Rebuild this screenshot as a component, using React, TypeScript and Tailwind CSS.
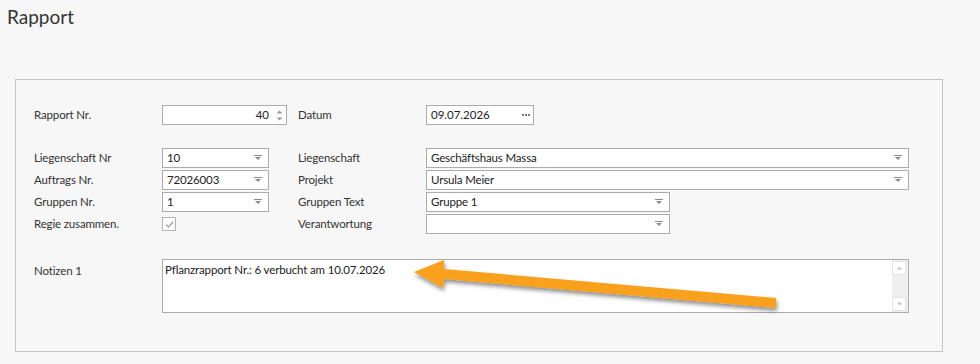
import React from 'react';

const font = { fontFamily: 'Lato, "Noto Sans", "Liberation Sans", sans-serif' };

// kleines Dropdown-Symbol (Strich + Dreieck)
function DropGlyph() {
  return (
    <svg width="8" height="6" viewBox="0 0 8 6" className="shrink-0">
      <rect x="0" y="0" width="8" height="1" fill="#8a8a8a" />
      <path d="M1 2 H7 L4 5 Z" fill="#8a8a8a" />
    </svg>
  );
}

function ComboBox({ value, width }: { value: string; width: string }) {
  return (
    <div className={`${width} h-5 bg-white border border-[#acacac] flex items-center pl-1 pr-[6px]`}>
      <span className="flex-1 text-[11.5px] tracking-[-0.15px] text-[#222] leading-none">{value}</span>
      <DropGlyph />
    </div>
  );
}

function Label({ children }: { children: React.ReactNode }) {
  return <div className="text-[11.5px] tracking-[-0.15px] text-[#333] leading-none">{children}</div>;
}

export default function App() {
  return (
    <div className="relative w-[980px] h-[364px] bg-[#f7f7f7] overflow-hidden" style={font}>
      <div className="pl-[7px] pt-[4px] text-[19px] text-[#333] leading-[26px]">Rapport</div>

      <div className="ml-[15px] mt-[49px] w-[928px] h-[273px] border border-[#c3c3c3] pl-[18px] pt-[25px]">
        {/* Rapport Nr. / Datum */}
        <div className="flex items-center h-5">
          <div className="w-[128px]"><Label>Rapport Nr.</Label></div>
          <div className="w-[136px]">
            <div className="w-[125px] h-5 bg-white border border-[#acacac] flex items-center pr-[2px]">
              <span className="flex-1 text-right text-[11.5px] text-[#222] leading-none pr-[5px]">40</span>
              <div className="flex flex-col items-center gap-[3px] w-[10px]">
                <svg width="7" height="4" viewBox="0 0 7 4"><path d="M0.5 3.5 L3.5 0.5 L6.5 3.5 Z" fill="#9a9a9a" /></svg>
                <svg width="7" height="4" viewBox="0 0 7 4"><path d="M0.5 0.5 L3.5 3.5 L6.5 0.5 Z" fill="#9a9a9a" /></svg>
              </div>
            </div>
          </div>
          <div className="w-[128px]"><Label>Datum</Label></div>
          <div className="w-[108px] h-5 bg-white border border-[#acacac] flex items-center pl-1 pr-[3px]">
            <span className="flex-1 text-[11.5px] text-[#222] leading-none">09.07.2026</span>
            <div className="flex gap-[1px]">
              <div className="w-[2px] h-[2px] bg-[#7a7a7a]" />
              <div className="w-[2px] h-[2px] bg-[#7a7a7a]" />
              <div className="w-[2px] h-[2px] bg-[#7a7a7a]" />
            </div>
          </div>
        </div>

        <div className="mt-[23px] flex flex-col gap-[2px]">
          <div className="flex items-center h-5">
            <div className="w-[128px]"><Label>Liegenschaft Nr</Label></div>
            <div className="w-[136px]"><ComboBox value="10" width="w-[107px]" /></div>
            <div className="w-[128px]"><Label>Liegenschaft</Label></div>
            <ComboBox value="Geschäftshaus Massa" width="w-[483px]" />
          </div>
          <div className="flex items-center h-5">
            <div className="w-[128px]"><Label>Auftrags Nr.</Label></div>
            <div className="w-[136px]"><ComboBox value="72026003" width="w-[107px]" /></div>
            <div className="w-[128px]"><Label>Projekt</Label></div>
            <ComboBox value="Ursula Meier" width="w-[483px]" />
          </div>
          <div className="flex items-center h-5">
            <div className="w-[128px]"><Label>Gruppen Nr.</Label></div>
            <div className="w-[136px]"><ComboBox value="1" width="w-[107px]" /></div>
            <div className="w-[128px]"><Label>Gruppen Text</Label></div>
            <ComboBox value="Gruppe 1" width="w-[244px]" />
          </div>
          <div className="flex items-center h-5">
            <div className="w-[128px]"><Label>Regie zusammen.</Label></div>
            <div className="w-[136px]">
              <div className="w-[14px] h-[14px] bg-white border border-[#b4b4b4] flex items-center justify-center">
                <svg width="9" height="7" viewBox="0 0 9 7"><path d="M1 3.5 L3.5 6 L8 1" fill="none" stroke="#9a9a9a" strokeWidth="1.2" /></svg>
              </div>
            </div>
            <div className="w-[128px]"><Label>Verantwortung</Label></div>
            <ComboBox value="" width="w-[244px]" />
          </div>
        </div>

        {/* Notizen */}
        <div className="mt-[25px] flex items-start">
          <div className="w-[128px] pt-[6px]"><Label>Notizen 1</Label></div>
          <div className="w-[747px] h-[54px] bg-white border border-[#acacac] flex">
            <div className="flex-1 pl-[2px] pt-[2px] text-[11.5px] tracking-[-0.15px] text-[#222] leading-[15px]">
              Pflanzrapport Nr.: 6 verbucht am 10.07.2026
            </div>
            <div className="w-[16px] bg-[#efefef] flex flex-col justify-between py-[1px] pr-[1px]">
              <div className="w-[14px] h-[14px] bg-white border border-[#e4e4e4] flex items-center justify-center">
                <svg width="7" height="4" viewBox="0 0 7 4"><path d="M0.5 3.5 L3.5 0.5 L6.5 3.5 Z" fill="#c8c8c8" /></svg>
              </div>
              <div className="w-[14px] h-[14px] bg-white border border-[#e4e4e4] flex items-center justify-center">
                <svg width="7" height="4" viewBox="0 0 7 4"><path d="M0.5 0.5 L3.5 3.5 L6.5 0.5 Z" fill="#c8c8c8" /></svg>
              </div>
            </div>
          </div>
        </div>
      </div>

      {/* Pfeil (Annotation) */}
      <svg className="absolute left-0 top-0 pointer-events-none" width="980" height="364" viewBox="0 0 980 364">
        <defs>
          <filter id="sh" x="-10%" y="-50%" width="120%" height="200%">
            <feDropShadow dx="1" dy="3" stdDeviation="2" floodColor="#000" floodOpacity="0.45" />
          </filter>
        </defs>
        <path
          d="M414 272 L444 260 L444 269 L776 298 L776 308 L444 279 L443 288 Z"
          fill="#f9a01b"
          filter="url(#sh)"
        />
      </svg>
    </div>
  );
}
